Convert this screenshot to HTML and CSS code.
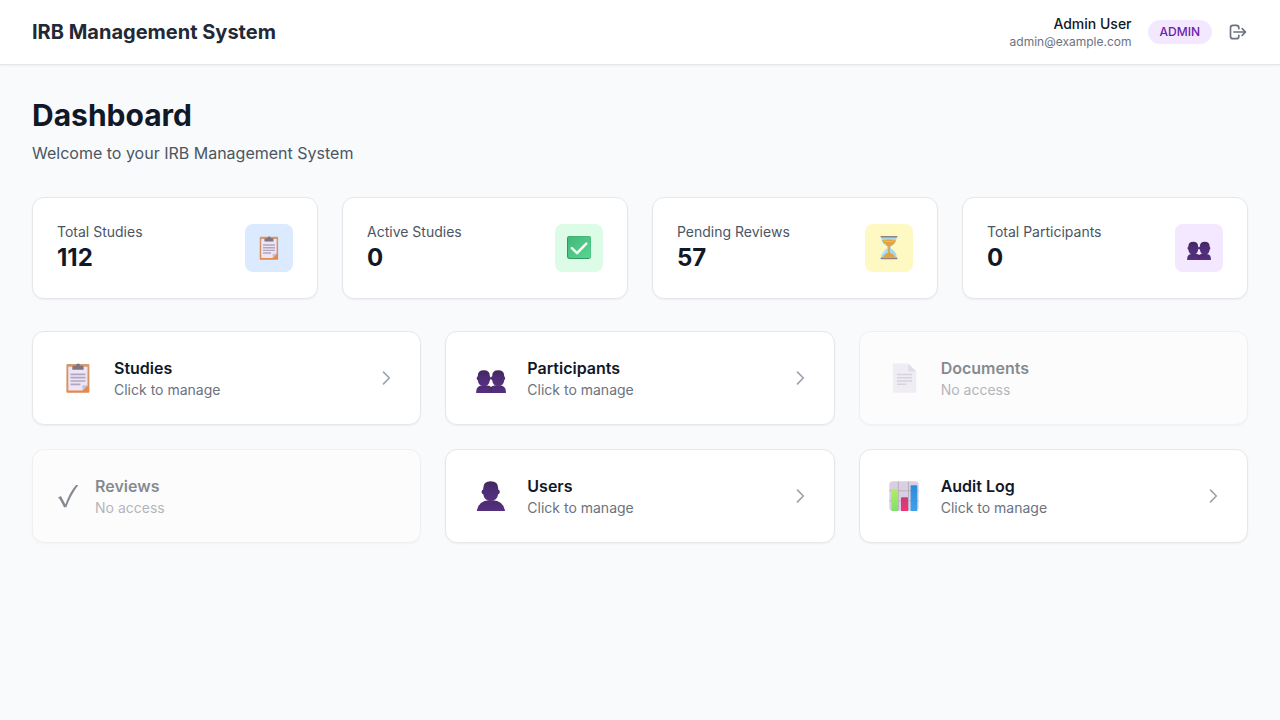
FILE: index.html
```html
<!DOCTYPE html>
<html lang="en">
<head>
<meta charset="utf-8">
<meta name="viewport" content="width=device-width, initial-scale=1">
<title>IRB Management System</title>
<link rel="stylesheet" href="styles.css">
</head>
<body>
<svg class="sprite" aria-hidden="true">
  <defs>
    <linearGradient id="g-board" x1="0" y1="0" x2="0" y2="1"><stop offset="0" stop-color="#d39a72"/><stop offset="1" stop-color="#e2894c"/></linearGradient>
    <linearGradient id="g-person" x1="0" y1="0" x2="0" y2="1"><stop offset="0" stop-color="#412958"/><stop offset=".35" stop-color="#4a2b72"/><stop offset="1" stop-color="#583180"/></linearGradient>
    <linearGradient id="g-body" x1="0" y1="0" x2="0" y2="1"><stop offset="0" stop-color="#4b2c70"/><stop offset="1" stop-color="#57307f"/></linearGradient>
    <linearGradient id="g-green" x1="0" y1="0" x2="0" y2="1"><stop offset="0" stop-color="#b0ee5c"/><stop offset="1" stop-color="#7fe06a"/></linearGradient>
    <linearGradient id="g-pink" x1="0" y1="0" x2="0" y2="1"><stop offset="0" stop-color="#cb3b72"/><stop offset="1" stop-color="#ef3479"/></linearGradient>
    <linearGradient id="g-blue" x1="0" y1="0" x2="0" y2="1"><stop offset="0" stop-color="#2f8bd5"/><stop offset="1" stop-color="#3da0ee"/></linearGradient>
    <linearGradient id="g-check" x1="0" y1="0" x2="1" y2="1"><stop offset="0" stop-color="#43b878"/><stop offset="1" stop-color="#5ad592"/></linearGradient>
  </defs>
  <symbol id="clipboard" viewBox="0 0 30 30">
    <rect x="3.400" y="1" width="23" height="28.800" rx="1" fill="url(#g-board)"/>
    <path d="M5.300 3.800h19.200v18.400l-5 5.200H5.300z" fill="#ece5f5"/>
    <path d="M24.500 22.200l-5 5.200v-4.200q0-1 1-1z" fill="#c9bdd6"/>
    <path d="M9.300 6.800V4.200q0-1.400 1.400-1.400h2.100q.6-2.300 2.300-2.300t2.300 2.300h1.800q1.400 0 1.400 1.400v2.600z" fill="#81747f"/>
    <path d="M7.500 11.300h15M7.500 14.700h15M7.500 18h15M7.500 21.300h10" stroke="#b3a5c1" stroke-width="1.700"/>
  </symbol>
  <symbol id="people" viewBox="0 0 30 30">
    <path d="M.2 30v-1.500q.3-5.700 5.600-6h6q2.300.2 3.300 1.400 1-1.200 3.300-1.400h6q5.300.3 5.500 6V30z" fill="url(#g-body)"/>
    <path d="M15.100 24.500v5.500" stroke="#3c245b" stroke-width=".7"/>
    <rect x=".7" y="13.200" width="14.200" height="4" rx="1.800" fill="#4a2b72"/>
    <rect x="14.900" y="13.200" width="14.200" height="4" rx="1.800" fill="#4a2b72"/>
    <path d="M1.800 13q-.2-5.700 6-5.700t6 5.700v4.500q-.8 5.700-6 5.700t-6-5.700zM16.200 13q-.2-5.700 6-5.700t6 5.700v4.500q-.8 5.700-6 5.700t-6-5.700z" fill="url(#g-person)"/>
  </symbol>
  <symbol id="person" viewBox="0 0 30 30">
    <path d="M.8 30Q2.400 19.600 13 19.200h3.800Q27.400 19.600 29 30z" fill="url(#g-body)"/>
    <rect x="5.700" y="8.600" width="18" height="4.600" rx="2" fill="#4a2b72"/>
    <path d="M7.200 7.500Q7.200.3 14.700.3t7.500 7.200v5.500q-1 7-7.500 7t-7.500-7z" fill="url(#g-person)"/>
  </symbol>
  <symbol id="document" viewBox="0 0 30 30">
    <path d="M4.900.5H19l8.200 8.200v20.100q0 1-1 1H4.900q-1 0-1-1V1.500q0-1 1-1z" fill="#e6e0ef"/>
    <path d="M19.200.5l8 8h-7q-1 0-1-1z" fill="#c9c2d2"/>
    <path d="M8 11.500h15M8 14.700h15M8 18h15M8 21.300h9.300" stroke="#b6adbf" stroke-width="1.400"/>
  </symbol>
  <symbol id="chart" viewBox="0 0 30 30">
    <rect x=".3" y=".3" width="29.400" height="29.400" rx="3.500" fill="#d9cfe1"/>
    <path d="M9.300.5v29M19.500.5v29M.5 9.800h29M.5 19.800h29" stroke="#b7aabd" stroke-width=".9"/>
    <path d="M2.400 30V9q0-1 1-1h4.200q1.400 0 1.400 1.400V30z" fill="url(#g-green)"/>
    <path d="M12 30V17.300q0-1 1-1h5q1 0 1 1V30z" fill="url(#g-pink)"/>
    <path d="M21.600 30V5.200q0-1 1-1h4.600q1 0 1 1V30z" fill="url(#g-blue)"/>
  </symbol>
  <symbol id="check" viewBox="0 0 24 24">
    <rect x="0" y="0" width="24" height="23" rx="2.400" fill="#2f9961"/>
    <rect x="1" y=".2" width="22.800" height="21.800" rx="2" fill="url(#g-check)"/>
    <path d="M4.800 12.200l5.300 5L19.300 7.600" fill="none" stroke="#f4fbf6" stroke-width="2.500" stroke-linecap="round" stroke-linejoin="round"/>
  </symbol>
  <symbol id="hourglass" viewBox="0 0 24 24">
    <path d="M4.500.7h15q.7 6.300-5.700 9.900v1.800q6.400 3.500 5.700 9.300h-15q-.7-5.800 5.700-9.300v-1.800Q3.800 7 4.500.7z" fill="#a7d7ec"/>
    <path d="M5.300 4.200q6.700-1.200 13.400 0-.5 3.500-5.900 6.200v6.200q3.700 1.400 5 4.300H6.200q1.300-2.900 5-4.300v-6.200Q5.800 7.700 5.300 4.200z" fill="#e2a23d"/>
    <path d="M6.400 4.900q5.600 1.300 11.200 0" fill="none" stroke="#f6bd58"/>
    <path d="M7 7.400q1 1.500 2.500 2.500M6 18.400q.7-2.500 2.800-4" stroke="#d7f1fa" fill="none"/>
    <rect x="3.600" y="-.4" width="16.800" height="1.900" rx=".5" fill="#8d8480"/>
    <rect x="3.600" y="21.400" width="16.800" height="1.900" rx=".5" fill="#8d8480"/>
  </symbol>
  <symbol id="tick" viewBox="0 0 22 30">
    <path d="M.9 16.700l3-1.600 4.500 8.500Q12.500 11.500 19 4h2.300Q13.800 14 9.300 26.200H7Q4 20.300 2.400 17.800z" fill="#111827"/>
  </symbol>
  <symbol id="chevron" viewBox="0 0 24 24">
    <path d="M9 5l7 7-7 7" fill="none" stroke="currentColor" stroke-width="2" stroke-linecap="round" stroke-linejoin="round"/>
  </symbol>
</svg>

<header class="topbar">
  <div class="brand">IRB Management System</div>
  <div class="account">
    <div class="identity">
      <div class="user-name">Admin User</div>
      <div class="user-email">admin@example.com</div>
    </div>
    <span class="role">ADMIN</span>
    <button class="logout" type="button" aria-label="Log out">
      <svg class="icon-small" viewBox="0 0 24 24" fill="none" stroke="currentColor" stroke-width="2" stroke-linecap="round" stroke-linejoin="round"><path d="M17 16l4-4m0 0l-4-4m4 4H7m6 4v1a3 3 0 01-3 3H6a3 3 0 01-3-3V7a3 3 0 013-3h4a3 3 0 013 3v1"/></svg>
    </button>
  </div>
</header>

<main class="page">
  <div class="intro">
    <h1>Dashboard</h1>
    <p>Welcome to your IRB Management System</p>
  </div>

  <section class="stats" aria-label="Statistics">
    <div class="card stat">
      <div><div class="stat-label">Total Studies</div><div class="stat-value">112</div></div>
      <div class="tile tile-blue"><svg class="emoji"><use href="#clipboard"/></svg></div>
    </div>
    <div class="card stat">
      <div><div class="stat-label">Active Studies</div><div class="stat-value">0</div></div>
      <div class="tile tile-green"><svg class="emoji"><use href="#check"/></svg></div>
    </div>
    <div class="card stat">
      <div><div class="stat-label">Pending Reviews</div><div class="stat-value">57</div></div>
      <div class="tile tile-yellow"><svg class="emoji"><use href="#hourglass"/></svg></div>
    </div>
    <div class="card stat">
      <div><div class="stat-label">Total Participants</div><div class="stat-value">0</div></div>
      <div class="tile tile-purple"><svg class="emoji"><use href="#people"/></svg></div>
    </div>
  </section>

  <nav class="modules" aria-label="Modules">
    <button class="card module" type="button">
      <span class="module-icon"><svg class="emoji-large"><use href="#clipboard"/></svg></span>
      <span class="module-text"><span class="module-title">Studies</span><span class="module-note">Click to manage</span></span>
      <svg class="icon-small chevron"><use href="#chevron"/></svg>
    </button>
    <button class="card module" type="button">
      <span class="module-icon"><svg class="emoji-large"><use href="#people"/></svg></span>
      <span class="module-text"><span class="module-title">Participants</span><span class="module-note">Click to manage</span></span>
      <svg class="icon-small chevron"><use href="#chevron"/></svg>
    </button>
    <button class="card module" type="button" disabled>
      <span class="module-icon"><svg class="emoji-large"><use href="#document"/></svg></span>
      <span class="module-text"><span class="module-title">Documents</span><span class="module-note">No access</span></span>
    </button>
    <button class="card module" type="button" disabled>
      <svg class="tick"><use href="#tick"/></svg>
      <span class="module-text"><span class="module-title">Reviews</span><span class="module-note">No access</span></span>
    </button>
    <button class="card module" type="button">
      <span class="module-icon"><svg class="emoji-large"><use href="#person"/></svg></span>
      <span class="module-text"><span class="module-title">Users</span><span class="module-note">Click to manage</span></span>
      <svg class="icon-small chevron"><use href="#chevron"/></svg>
    </button>
    <button class="card module" type="button">
      <span class="module-icon"><svg class="emoji-large"><use href="#chart"/></svg></span>
      <span class="module-text"><span class="module-title">Audit Log</span><span class="module-note">Click to manage</span></span>
      <svg class="icon-small chevron"><use href="#chevron"/></svg>
    </button>
  </nav>
</main>
</body>
</html>
```

FILE: styles.css
```css
* {
  box-sizing: border-box;
}

body {
  margin: 0;
  min-height: 100vh;
  background: #f9fafb;
  color: #111827;
  font: 16px/24px Inter, "Liberation Sans", sans-serif;
}

h1,
p {
  margin: 0;
}

button {
  font: inherit;
  color: inherit;
  cursor: pointer;
}

svg {
  display: block;
}

.sprite {
  position: absolute;
  width: 0;
  height: 0;
}

.topbar {
  display: flex;
  align-items: center;
  justify-content: space-between;
  min-height: 65px;
  padding: 0 32px;
  background: #fff;
  border-bottom: 1px solid #e5e7eb;
  box-shadow: 0 1px 2px rgba(0, 0, 0, 0.05);
}

.brand {
  color: #1f2937;
  font-size: 20px;
  line-height: 28px;
  font-weight: 700;
}

.account {
  display: flex;
  align-items: center;
  gap: 16px;
}

.identity {
  text-align: right;
}

.user-name {
  font-size: 14px;
  line-height: 20px;
  font-weight: 500;
}

.user-email {
  color: #6b7280;
  font-size: 12px;
  line-height: 16px;
}

.role {
  padding: 4px 12px;
  border-radius: 12px;
  background: #f3e8ff;
  color: #6b21a8;
  font-size: 12px;
  line-height: 16px;
  font-weight: 500;
}

.logout {
  padding: 0;
  border: 0;
  background: none;
  color: #6b7280;
}

.icon-small {
  width: 20px;
  height: 20px;
}

.page {
  padding: 32px;
}

.intro {
  margin-bottom: 32px;
}

.intro h1 {
  margin-bottom: 8px;
  font-size: 30px;
  line-height: 36px;
  font-weight: 700;
}

.intro p {
  color: #4b5563;
}

.card {
  padding: 24px;
  background: #fff;
  border: 1px solid #e5e7eb;
  border-radius: 12px;
  box-shadow: 0 1px 2px rgba(0, 0, 0, 0.05);
}

.stats {
  display: grid;
  grid-template-columns: repeat(auto-fit, minmax(240px, 1fr));
  gap: 24px;
  margin-bottom: 32px;
}

.stat {
  display: flex;
  align-items: center;
  justify-content: space-between;
}

.stat-label {
  color: #4b5563;
  font-size: 14px;
  line-height: 20px;
}

.stat-value {
  font-size: 24px;
  line-height: 32px;
  font-weight: 700;
}

.tile {
  display: grid;
  place-items: center;
  width: 48px;
  height: 48px;
  border-radius: 8px;
}

.tile-blue {
  background: #dbeafe;
}

.tile-green {
  background: #dcfce7;
}

.tile-yellow {
  background: #fef9c3;
}

.tile-purple {
  background: #f3e8ff;
}

.emoji {
  width: 24px;
  height: 24px;
  overflow: visible;
}

.modules {
  display: grid;
  grid-template-columns: repeat(auto-fit, minmax(320px, 1fr));
  gap: 24px;
}

.module {
  display: flex;
  align-items: center;
  gap: 16px;
  text-align: left;
}

.module:disabled {
  opacity: 0.5;
  cursor: not-allowed;
}

.module-icon {
  display: flex;
  justify-content: center;
  width: 41px;
}

.emoji-large {
  width: 30px;
  height: 30px;
}

.tick {
  width: 22px;
  height: 30px;
}

.module-text {
  flex: 1;
}

.module-title,
.module-note {
  display: block;
}

.module-title {
  font-weight: 600;
}

.module-note {
  color: #6b7280;
  font-size: 14px;
  line-height: 20px;
}

.chevron {
  color: #9ca3af;
}
```
